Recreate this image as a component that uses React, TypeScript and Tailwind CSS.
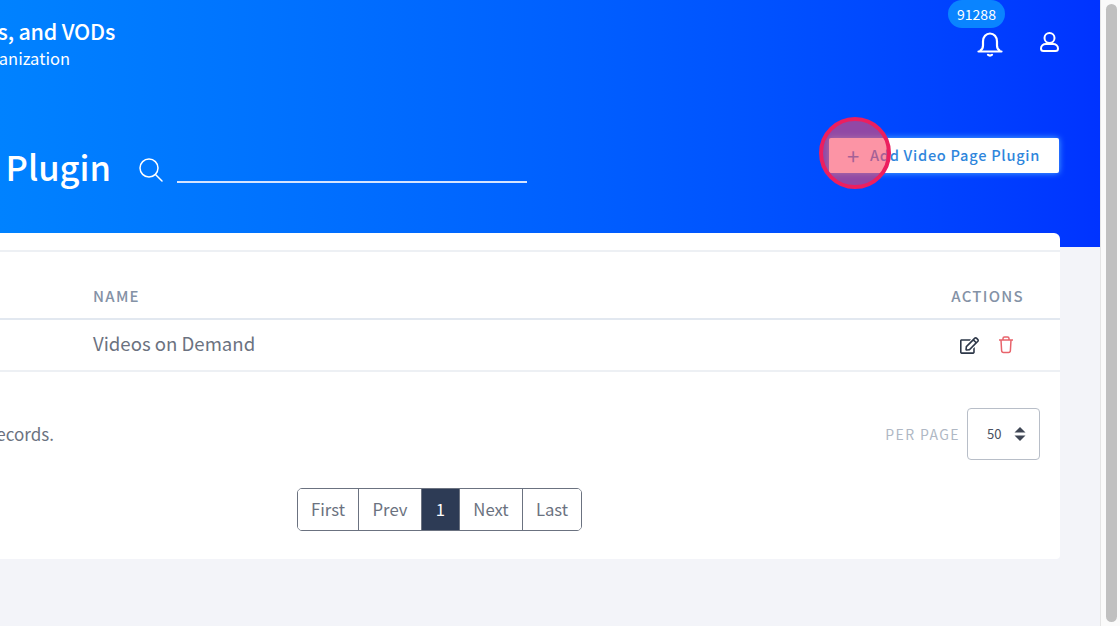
import { FaRegEdit } from 'react-icons/fa';

const FONT = "font-['Noto_Sans_CJK_JP','Noto_Sans',sans-serif]";

const PAGES = [
  { label: 'First', width: 'w-[60px]', active: false },
  { label: 'Prev', width: 'w-[63px]', active: false },
  { label: '1', width: 'w-[38px]', active: true },
  { label: 'Next', width: 'w-[63px]', active: false },
  { label: 'Last', width: 'w-[59px]', active: false },
];

function BellIcon() {
  return (
    <svg width="28" height="28" viewBox="0 0 28 28" fill="none" stroke="white" strokeWidth="2.2" strokeLinecap="round" strokeLinejoin="round">
      <path d="M4.500 21.500c1.500-1 2.500-2.500 2.500-5v-4C7 7.800 10 4.500 14 4.500s7 3.300 7 8v4c0 2.500 1 4 2.500 5" />
      <path d="M2.500 22.500h23" />
      <path d="M12 25.800c1 1 3 1 4 0" />
    </svg>
  );
}

function UserIcon() {
  return (
    <svg width="24" height="24" viewBox="0 0 24 24" fill="none" stroke="white" strokeWidth="2" strokeLinejoin="round">
      <circle cx="12.500" cy="7" r="5" />
      <path d="M4 17.500c0-2.800 2.200-4.500 5-4.500h7c2.800 0 5 1.700 5 4.500 0 1.800-.9 2.500-2.500 2.500h-12c-1.600 0-2.500-.7-2.500-2.500z" />
    </svg>
  );
}

function SearchIcon() {
  return (
    <svg width="24" height="24" viewBox="0 0 24 24" fill="none" stroke="white" strokeWidth="1.500" strokeLinecap="round" className="ml-[28px] mt-[32px]">
      <circle cx="10" cy="10" r="9" />
      <path d="M16.500 16.500l6.500 6.500" />
    </svg>
  );
}

function TrashIcon() {
  return (
    <svg width="16" height="18" viewBox="0 0 16 18" fill="none" stroke="#e8636b" strokeWidth="1.500" strokeLinejoin="round">
      <path d="M1 4h14" />
      <path d="M5 4V2.500C5 1.700 5.700 1 6.500 1h3c.8 0 1.500.7 1.500 1.500V4" />
      <path d="M3 4l.6 10.500c.1 1.300.8 2 1.900 2h5c1.100 0 1.800-.7 1.900-2L13 4" />
    </svg>
  );
}

export default function App() {
  return (
    <div className={`${FONT} flex h-[626px] w-[1120px] overflow-hidden bg-white`}>
      <main className="relative flex h-full w-[1100px] flex-col overflow-hidden bg-[#f3f4f9]">
        {/* 상단 헤더 */}
        <header className="flex h-[247px] shrink-0 flex-col bg-gradient-to-r from-[#0082ff] to-[#0033ff] pr-[40px] text-white">
          <div className="flex h-[126px] items-start justify-between">
            <div className="-ml-[300px] w-[415px] pt-[16px] text-right">
              <div className="text-[21.500px] leading-[30px] font-medium tracking-[-0.01em] whitespace-nowrap">Live Streams, OTTs, and VODs</div>
              <div className="w-[370px] text-[16.500px] leading-[25px] whitespace-nowrap">Your Organization</div>
            </div>
            <div className="relative -mr-[1px] flex items-center gap-[33px] pt-[29px]">
              <span className="absolute top-0 left-[-28px] flex h-[28px] w-[57px] items-center justify-center rounded-full bg-[#0a84ff] text-[14px] leading-none">
                91288
              </span>
              <BellIcon />
              <UserIcon />
            </div>
          </div>
          <div className="flex items-start">
            <h1 className="-ml-[300px] mt-[17px] w-[411px] text-right text-[34.500px] leading-[46px] font-medium whitespace-nowrap">
              Video Page Plugin
            </h1>
            <SearchIcon />
            <div className="ml-[14px] mt-[55px] h-[2px] w-[350px] bg-[#d5e4ff]" />
            <button className="ml-auto mr-[1px] mt-[12px] flex h-[35px] w-[230px] items-center rounded-[2px] bg-white pb-[2px] pl-[18px] text-[14.600px] font-medium tracking-[0.05em] text-[#2f86dc] shadow-[0_0_6px_rgba(90,190,255,0.9)]">
              <span className="mr-[10px] text-[22px] leading-none font-normal">+</span>
              Add Video Page Plugin
            </button>
          </div>
        </header>

        {/* 테이블 카드 */}
        <div className="-mt-[14px] mr-[40px] -ml-[20px] h-[326px] shrink-0 rounded-t-[6px] rounded-b-[4px] bg-white">
          <div className="h-[19px] border-b-2 border-[#edf0f4]" />
          <div className="flex h-[68px] items-end justify-between border-b-2 border-[#e2e8f0] pr-[36px] pb-[12px] pl-[113px] text-[15px] leading-[20px] font-medium tracking-[0.085em] text-[#8492a6]">
            <span>NAME</span>
            <span>ACTIONS</span>
          </div>
          <div className="flex h-[52px] items-center justify-between border-b-2 border-[#edf0f4] pr-[46px] pl-[113px]">
            <span className="-mt-[4px] text-[18.600px] text-[#6b7280]">Videos on Demand</span>
            <div className="flex items-center gap-[19px]">
              <FaRegEdit size={19} className="text-[#2d3748]" />
              <TrashIcon />
            </div>
          </div>
          <div className="flex h-[88px] items-end justify-between pr-[20px] pl-[20px]">
            <span className="-ml-[200px] w-[254px] pb-[14px] text-right text-[17px] whitespace-nowrap text-[#6b7280]">
              Showing 1 to 1 of 1 records.
            </span>
            <div className="flex items-center gap-[7px]">
              <span className="text-[14px] tracking-[0.1em] text-[#b0b8c4]">PER PAGE</span>
              <div className="flex h-[52px] w-[73px] items-center justify-between rounded-[4px] border border-[#b8bec8] pr-[13px] pl-[19px] text-[13px] text-[#4a5160]">
                50
                <svg width="12" height="14" viewBox="0 0 12 14" fill="#3f4654">
                  <path d="M6 0l5.500 5.500H.5z" />
                  <path d="M6 14L.5 8.500h11z" />
                </svg>
              </div>
            </div>
          </div>
          <nav className="mt-[28px] ml-[317px] flex h-[43px] w-fit overflow-hidden rounded-[5px] border-[1.500px] border-[#6b7280]">
            {PAGES.map((page, idx) => (
              <span
                key={page.label}
                className={`flex ${page.width} items-center justify-center text-[16.700px] ${idx > 0 ? 'border-l border-[#6b7280]' : ''} ${
                  page.active ? 'bg-[#2d3b55] text-white' : 'bg-white text-[#6b7280]'
                }`}
              >
                {page.label}
              </span>
            ))}
          </nav>
        </div>

        {/* 클릭 위치 표시 */}
        <div className="absolute top-[117px] left-[819px] h-[72px] w-[72px] rounded-full border-[4px] border-[#ec1f5f] bg-[rgba(250,70,100,0.58)]" />
      </main>
      <aside className="flex w-[20px] justify-center border-l border-[#e4e4e4] bg-[#fafafa] py-[4px] pl-[1px]">
        <div className="h-full w-[11px] rounded-full bg-[#c0c0c0]" />
      </aside>
    </div>
  );
}
